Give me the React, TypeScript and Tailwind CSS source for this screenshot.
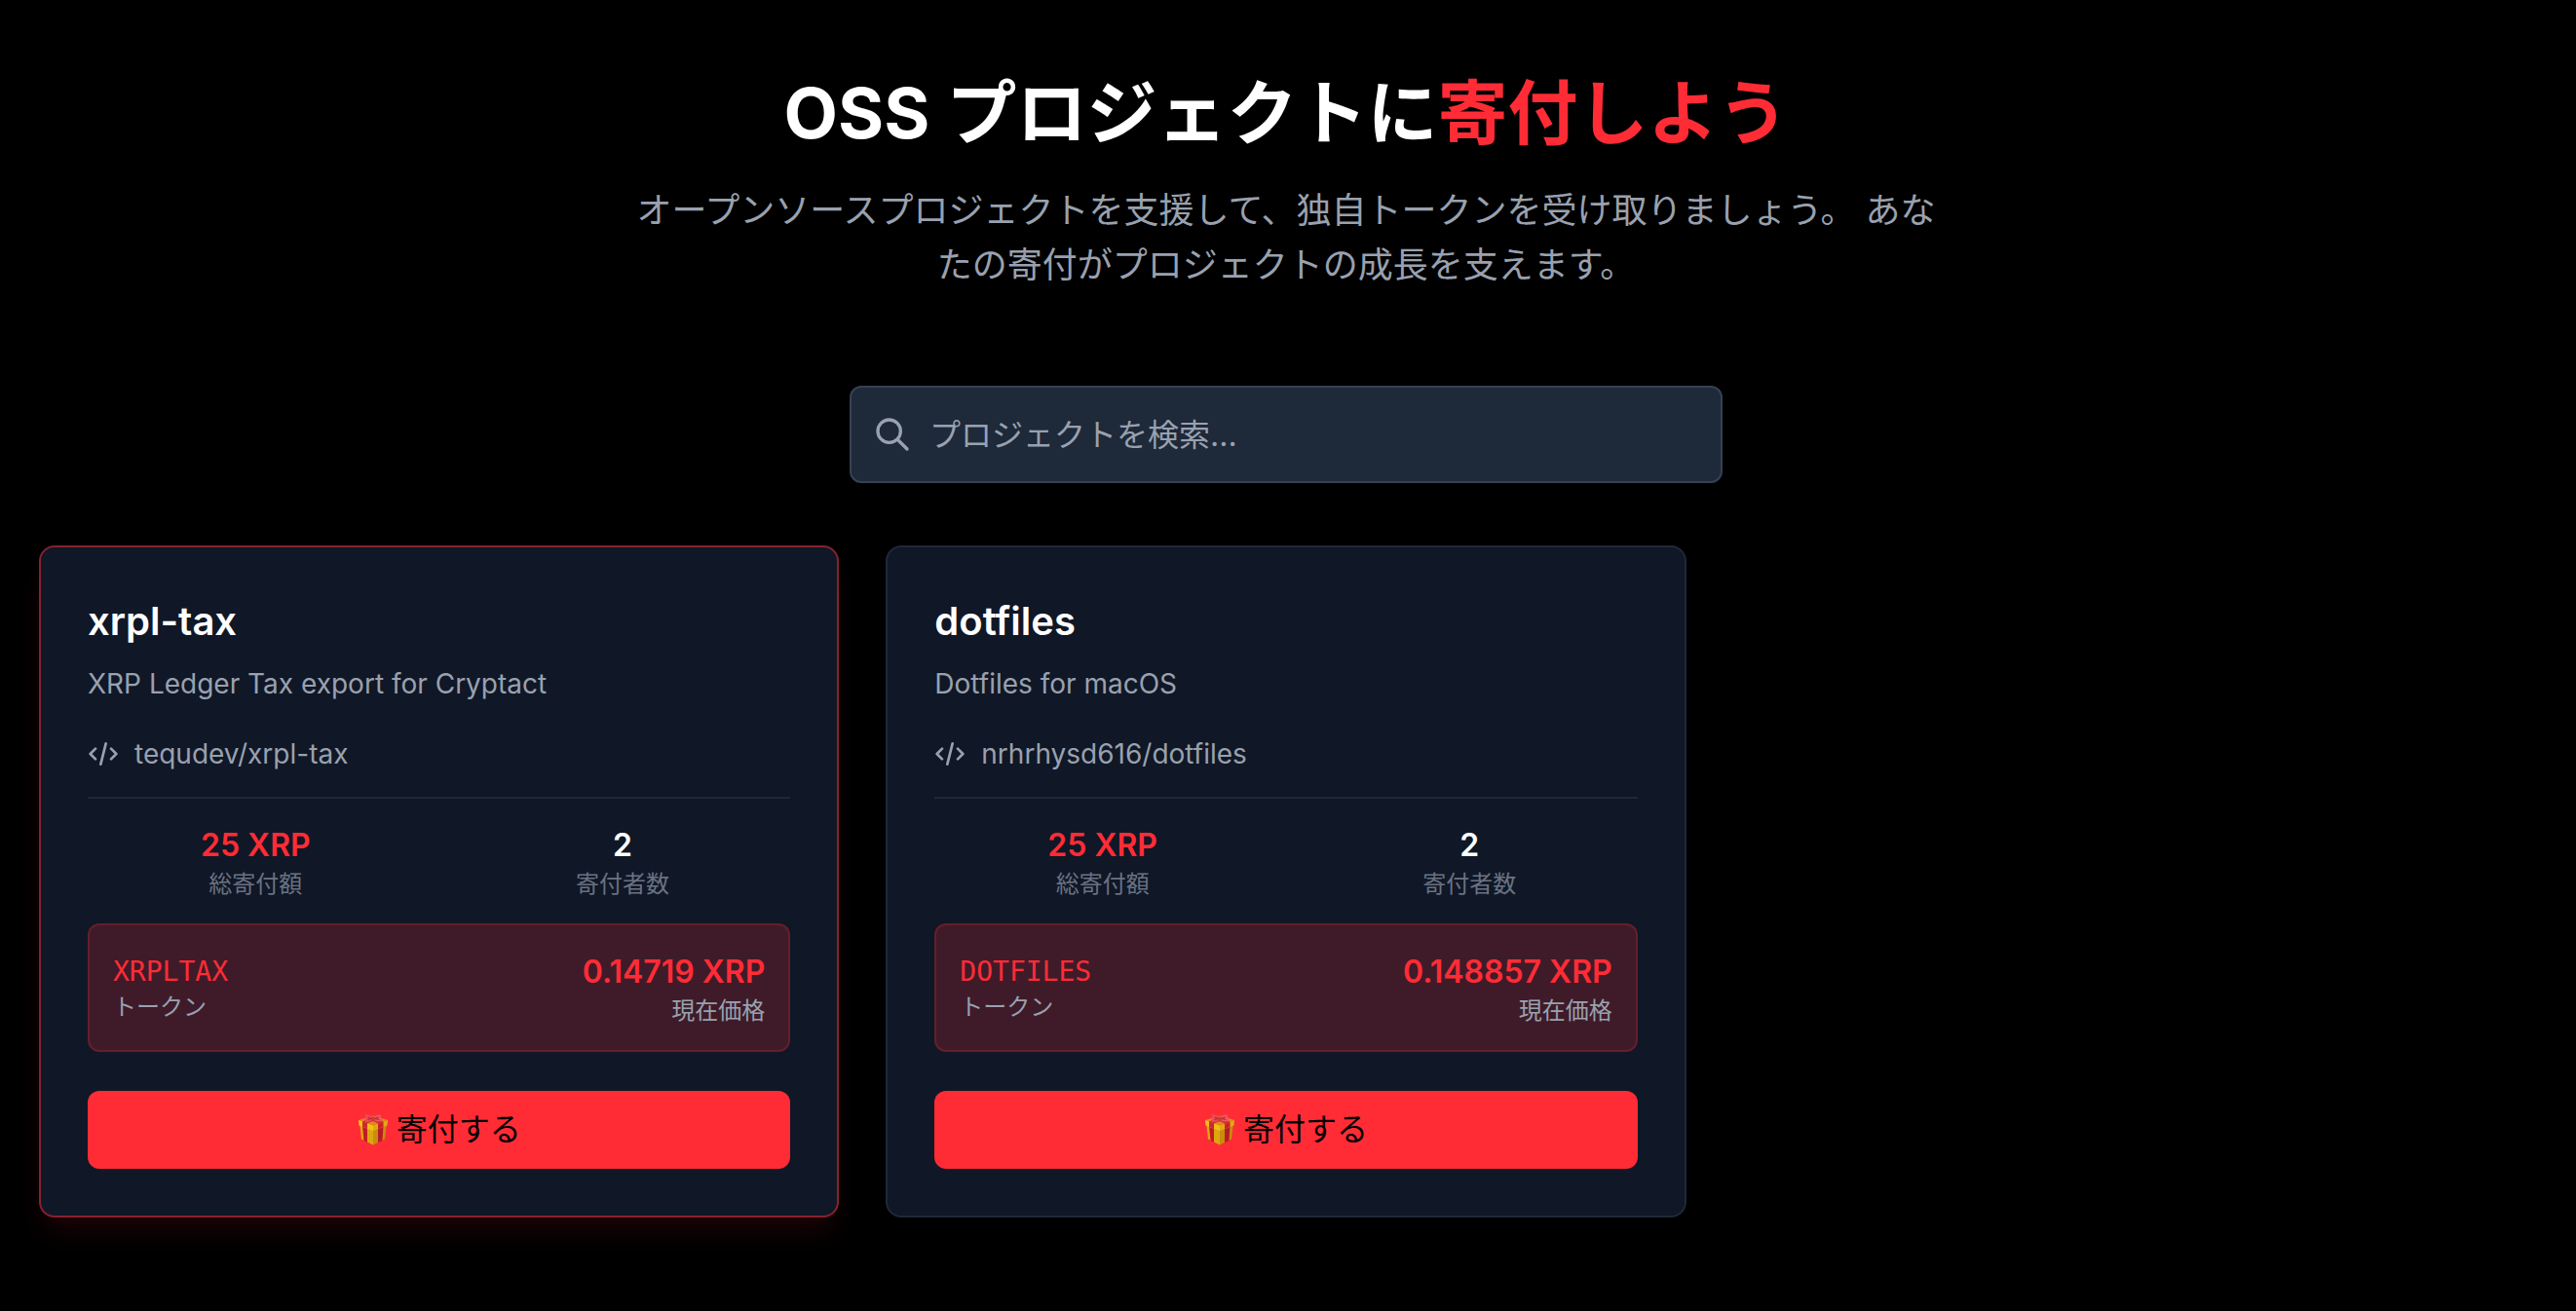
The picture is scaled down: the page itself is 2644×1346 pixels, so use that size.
type Project = {
  name: string
  description: string
  repo: string
  total: string
  donors: number
  token: string
  price: string
  featured: boolean
}

const projects: Project[] = [
  {
    name: 'xrpl-tax',
    description: 'XRP Ledger Tax export for Cryptact',
    repo: 'tequdev/xrpl-tax',
    total: '25 XRP',
    donors: 2,
    token: 'XRPLTAX',
    price: '0.14719 XRP',
    featured: true,
  },
  {
    name: 'dotfiles',
    description: 'Dotfiles for macOS',
    repo: 'nrhrhysd616/dotfiles',
    total: '25 XRP',
    donors: 2,
    token: 'DOTFILES',
    price: '0.148857 XRP',
    featured: false,
  },
]

function SearchIcon() {
  return (
    <svg className="size-10" viewBox="0 0 24 24" fill="none" stroke="currentColor" strokeWidth={2} strokeLinecap="round" strokeLinejoin="round" aria-hidden="true">
      <path d="M21 21l-6-6m2-5a7 7 0 11-14 0 7 7 0 0114 0z" />
    </svg>
  )
}

function CodeIcon() {
  return (
    <svg className="size-8 shrink-0" viewBox="0 0 24 24" fill="none" stroke="currentColor" strokeWidth={2} strokeLinecap="round" strokeLinejoin="round" aria-hidden="true">
      <path d="M10 20l4-16m4 4l4 4-4 4M6 16l-4-4 4-4" />
    </svg>
  )
}

function GiftIcon() {
  return (
    <svg className="size-8 shrink-0" viewBox="0.5 0.5 31 32" aria-hidden="true">
      <path d="M2 9 16 15V32L4 26Z" fill="#dfa50f" />
      <path d="M16 15 30 9 28 26 16 32Z" fill="#c98c0c" />
      <path d="M5 12 10 14V29.5L6.500 27.500Z" fill="#c01c26" />
      <path d="M21 13 26.500 11 25.500 27.500 21 29.700Z" fill="#b81a24" />
      <path d="M1 6.500 16 2 31 6.500 16 12Z" fill="#e08c14" />
      <path d="M1 6.500 16 12V17.500L1.500 12Z" fill="#f3be1c" />
      <path d="M16 12 31 6.500 30.500 12 16 17.500Z" fill="#e2a914" />
      <path d="M5 8 10 9.800V15.300L5 13.300Z" fill="#cf2630" />
      <path d="M21 10.200 26.500 8.200V13.500L21 15.600Z" fill="#c8222c" />
      <path d="M5 8 15 3 26.500 8.200 21 10.200 16 7.500 10 9.800Z" fill="#cf2a34" />
      <path d="M13 8.500 16 7.500 19 9 16 10.300Z" fill="#e08c14" />
      <path d="M15 3.500C12 1 9 .5 8 1L7.500 8C10 9 13 8 15 6.500Z" fill="#ea4c58" />
      <path d="M17 3.500C19 1 22 .5 23.500 1L25.500 7C22 9 19 8 17 6.500Z" fill="#ee5560" />
      <path d="M10.500 3.500 14 5 10.500 6M21.500 3.500 18 5 22 6" fill="none" stroke="#b3212f" strokeWidth={1} />
      <rect x={14} y={3} width={4} height={5} rx={1.5} fill="#d53440" />
    </svg>
  )
}

function ProjectCard({ project }: { project: Project }) {
  return (
    <article
      className={
        project.featured
          ? 'rounded-2xl border-2 border-[#ff2c36]/50 bg-[#101726] p-12 shadow-[0_20px_30px_-6px_rgba(255,44,54,0.1),0_8px_12px_-8px_rgba(255,44,54,0.1)]'
          : 'rounded-2xl border-2 border-[#1e2939] bg-[#101726] p-12'
      }
    >
      <h2 className="mb-4 text-[40px] leading-14 font-semibold text-white">{project.name}</h2>
      <p className="mb-8 text-[28px] leading-10 text-[#99a1af]">{project.description}</p>
      <a href={`https://github.com/${project.repo}`} className="flex items-center gap-4 text-[28px] leading-10 text-[#99a1af]">
        <CodeIcon />
        {project.repo}
      </a>
      <dl className="mt-6 grid grid-cols-2 gap-8 border-t-2 border-[#1e2939] py-6 text-center">
        <div className="flex flex-col-reverse">
          <dt className="text-2xl leading-8 text-[#6a7282]">総寄付額</dt>
          <dd className="text-[32px] leading-12 font-semibold text-[#ff2c36]">{project.total}</dd>
        </div>
        <div className="flex flex-col-reverse">
          <dt className="text-2xl leading-8 text-[#6a7282]">寄付者数</dt>
          <dd className="text-[32px] leading-12 font-semibold text-white">{project.donors}</dd>
        </div>
      </dl>
      <div className="flex items-center justify-between rounded-xl border-2 border-[#ff2c36]/20 bg-[#ff2c36]/20 p-6">
        <div>
          <p className="font-['DejaVu_Sans_Mono','Noto_Sans_CJK_JP',monospace] text-[28px] leading-10 text-[#ff2c36]">{project.token}</p>
          <p className="text-2xl leading-8 text-[#99a1af]">トークン</p>
        </div>
        <div className="text-right">
          <p className="text-[32px] leading-12 font-semibold text-[#ff2c36]">{project.price}</p>
          <p className="text-2xl leading-8 text-[#99a1af]">現在価格</p>
        </div>
      </div>
      <button type="button" className="mt-10 flex w-full items-center justify-center gap-2 rounded-xl bg-[#ff2c36] pt-4 pb-4 text-[32px] leading-12 text-black">
        <GiftIcon />
        寄付する
      </button>
    </article>
  )
}

export default function App() {
  return (
    <div lang="ja" className="min-h-screen bg-black pr-1 font-['Inter','Noto_Sans_CJK_JP',sans-serif]">
      <main className="mx-auto max-w-[2560px] pt-19 pb-20">
        <header className="mb-24 text-center">
          <h1 className="mb-8 text-7xl leading-20 font-bold text-white">
            OSS プロジェクトに<span className="text-[#ff2c36]">寄付しよう</span>
          </h1>
          <p className="mx-auto max-w-[1344px] text-4xl leading-14 text-[#99a1af]">
            オープンソースプロジェクトを支援して、独自トークンを受け取りましょう。 あなたの寄付がプロジェクトの成長を支えます。
          </p>
        </header>
        <div className="relative mx-auto mb-16 max-w-4xl">
          <span className="pointer-events-none absolute inset-y-0 left-0 flex items-center pl-6 text-[#99a1af]">
            <SearchIcon />
          </span>
          <input
            type="search"
            aria-label="プロジェクトを検索"
            placeholder="プロジェクトを検索..."
            className="block h-25 w-full rounded-xl border-2 border-[#364153] bg-[#1e2939] pr-8 pl-20 text-[32px] text-white placeholder:text-[#99a1af]"
          />
        </div>
        <section aria-label="プロジェクト一覧" className="grid grid-cols-3 gap-12">
          {projects.map((project) => (
            <ProjectCard key={project.repo} project={project} />
          ))}
        </section>
      </main>
    </div>
  )
}
